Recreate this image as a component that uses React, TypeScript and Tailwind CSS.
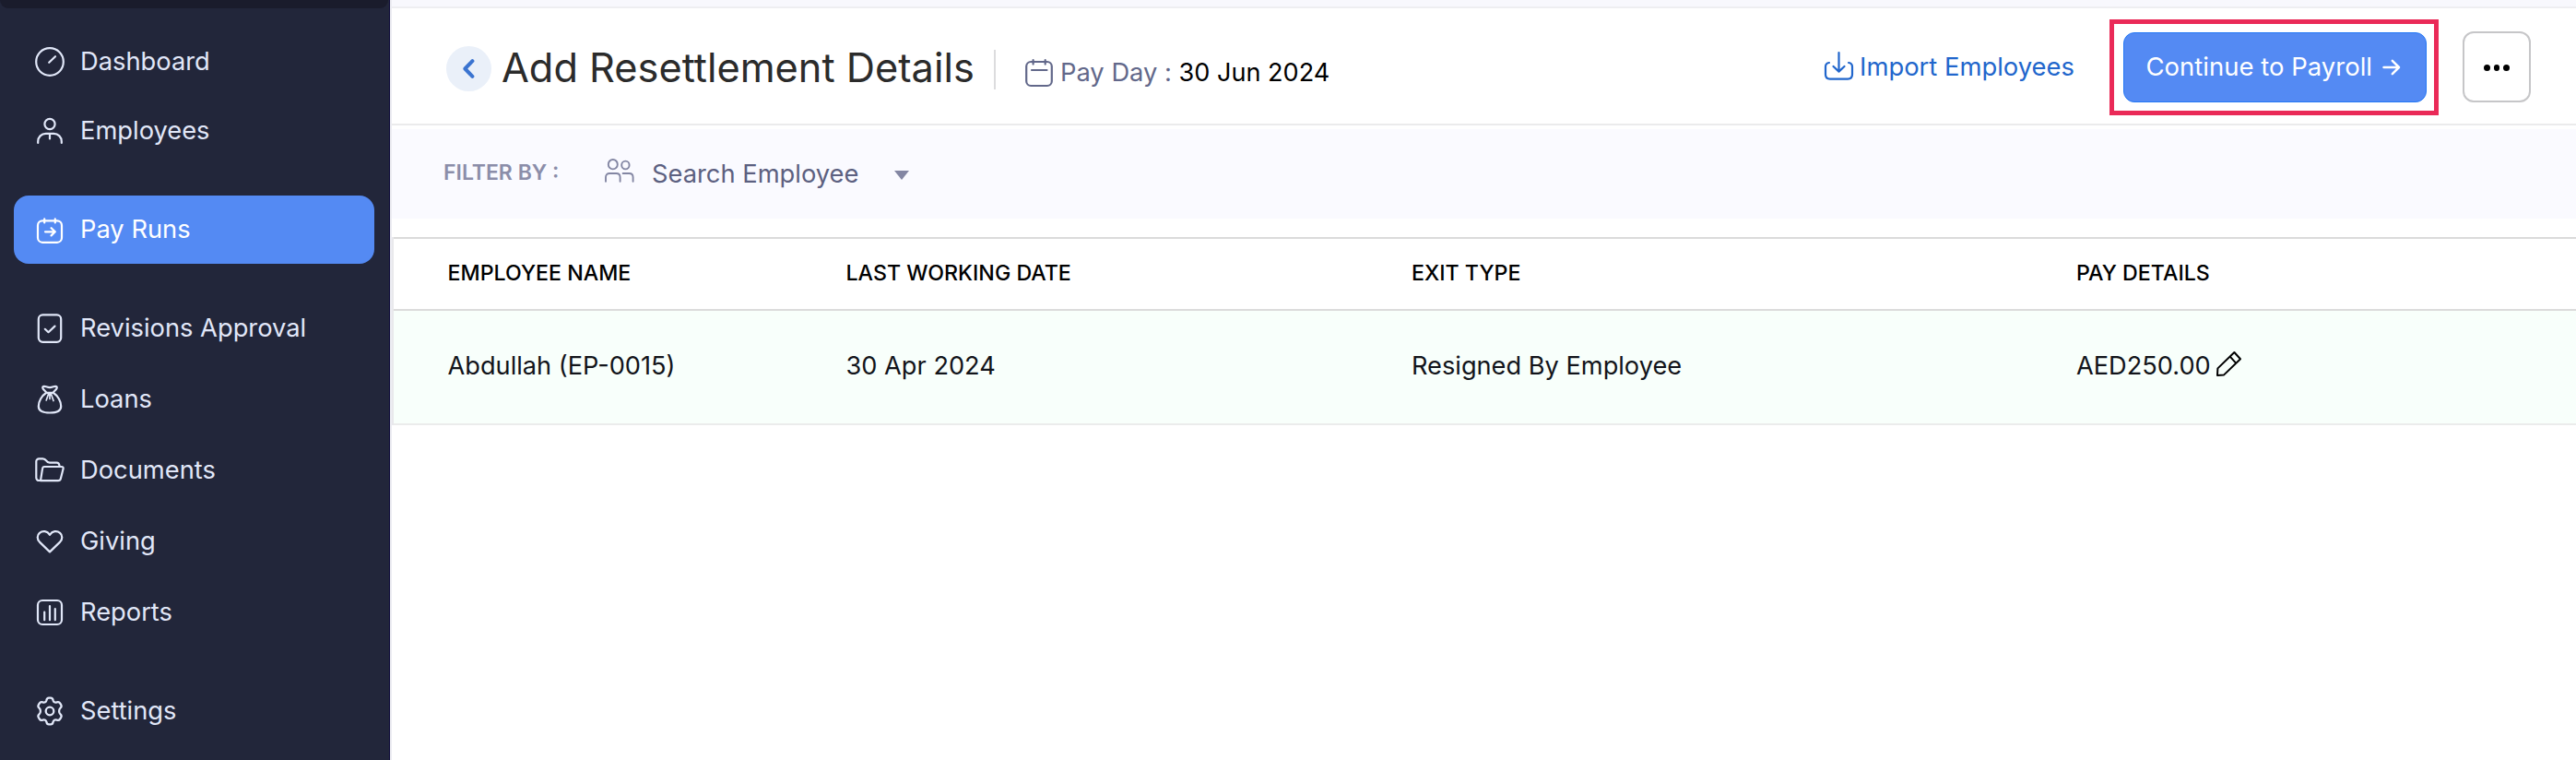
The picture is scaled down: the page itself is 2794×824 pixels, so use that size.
import type { ReactNode } from "react";

function Icon({ children, className = "w-8 h-8", box = "0 0 32 32", stroke = 2.2 }: {
  children: ReactNode;
  className?: string;
  box?: string;
  stroke?: number;
}) {
  return (
    <svg
      viewBox={box}
      className={`shrink-0 overflow-visible ${className}`}
      fill="none"
      stroke="currentColor"
      strokeWidth={stroke}
      strokeLinecap="round"
      strokeLinejoin="round"
    >
      {children}
    </svg>
  );
}

const navItems = [
  {
    name: "Dashboard",
    gap: "mt-[30px]",
    icon: (
      <Icon>
        <circle cx="16" cy="16" r="14.8" />
        <path d="M15.2 16.8 22 10.2" />
      </Icon>
    ),
  },
  {
    name: "Employees",
    gap: "mt-px",
    icon: (
      <Icon>
        <circle cx="16" cy="8.5" r="5.6" />
        <path d="M3.2 29v-1.5a8.5 8.5 0 0 1 8.5-8.7h8.6a8.5 8.5 0 0 1 8.5 8.7V29M16 19v5.5" />
      </Icon>
    ),
  },
  {
    name: "Pay Runs",
    gap: "mt-[33px]",
    active: true,
    icon: (
      <Icon>
        <rect x="3" y="6.4" width="26" height="23.4" rx="5" />
        <path d="M10.2 4.4v4M21.8 4.4v4M11 18.3h10.5M17.6 14.2l4.2 4.1-4.2 4.1" />
      </Icon>
    ),
  },
  {
    name: "Revisions Approval",
    gap: "mt-[33px]",
    icon: (
      <Icon>
        <rect x="3.8" y="1.4" width="24.4" height="29.4" rx="4.5" />
        <path d="m10.8 16.8 3.7 3.4 7-6.6" />
      </Icon>
    ),
  },
  {
    name: "Loans",
    gap: "mt-[3px]",
    icon: (
      <Icon>
        <path d="M12.3 8.8C11 6.4 7.2 4.6 8.4 2.5c1.5-2 4 .6 7.6.6s6.1-2.6 7.6-.6c1.2 2.1-2.6 3.9-3.9 6.3z" />
        <path d="M12.3 8.8C7 12.2 3.8 18.6 3.8 23.4c0 5 4.2 7.1 12.2 7.1s12.2-2.1 12.2-7.1c0-4.8-3.2-11.2-8.5-14.6" />
        <path d="M14.8 9.5 12.2 17M16 9.5v6M17.2 9.5l2.8 8" strokeWidth="1.7" />
      </Icon>
    ),
  },
  {
    name: "Documents",
    gap: "mt-[3px]",
    icon: (
      <Icon>
        <path d="M6 27H4.3a3 3 0 0 1-3-3V6.3a3 3 0 0 1 3-3h4.2c1.7 0 2.6.6 3.6 2.1s2 2.3 3.7 2.3h7.7c1.8 0 2.6.9 3 3.2" />
        <path d="M10.2 12h18.4c1.7 0 2.3 1 1.9 2.5l-2.6 10.3c-.4 1.7-1.2 2.4-2.9 2.4H6l2-12.8c.2-1.6.8-2.4 2.2-2.4z" />
      </Icon>
    ),
  },
  {
    name: "Giving",
    gap: "mt-[3px]",
    icon: (
      <Icon>
        <path d="M16 27.4 4.9 16.6C2 13.5 2 9.3 4.9 6.8 8.3 4 13.2 4.6 16 8.8c2.8-4.2 7.7-4.8 11.1-2 2.9 2.5 2.9 6.7 0 9.8z" />
      </Icon>
    ),
  },
  {
    name: "Reports",
    gap: "mt-[3px]",
    icon: (
      <Icon>
        <rect x="3" y="3" width="26" height="26" rx="5" />
        <path d="M10.2 15.5v8.7M16 9v15.2M21.8 12v12.2" />
      </Icon>
    ),
  },
  {
    name: "Settings",
    gap: "mt-[33px]",
    icon: (
      <Icon stroke={2.3}>
        <path d="M12.4 4.2C12.7 2.4 13.4 1.6 15 1.6h2c1.6 0 2.3.8 2.6 2.6.4 2 2 2.9 3.9 2.2 1.7-.7 2.8-.4 3.6 1l1.1 1.8c.8 1.4.5 2.5-.9 3.6-1.6 1.3-1.6 5.1 0 6.4 1.4 1.1 1.7 2.2.9 3.6l-1.1 1.8c-.8 1.4-1.9 1.7-3.6 1-1.9-.7-3.5.2-3.9 2.2-.3 1.8-1 2.6-2.6 2.6h-2c-1.6 0-2.3-.8-2.6-2.6-.4-2-2-2.9-3.9-2.2-1.7.7-2.8.4-3.6-1l-1.1-1.8c-.8-1.4-.5-2.5.9-3.6 1.6-1.3 1.6-5.1 0-6.4-1.4-1.1-1.7-2.2-.9-3.6l1.1-1.8c.8-1.4 1.9-1.7 3.6-1 1.9.7 3.5-.2 3.9-2.2z" />
        <circle cx="16" cy="16" r="4.3" />
      </Icon>
    ),
  },
];

function Sidebar() {
  return (
    <aside className="w-[423px] shrink-0 h-full bg-[#22263a] border-r border-[#0d0b38]">
      <div className="h-[9px] w-[421px] rounded-b-2xl bg-[#1a1c2c]" />
      <nav className="flex flex-col px-[15px] -mt-[9px]">
        {navItems.map((item) => (
          <a
            key={item.name}
            href="#"
            className={`flex items-center h-[74px] w-[391px] rounded-2xl pl-[23px] gap-[17px] text-[27.3px] ${
              item.active ? "bg-[#548af3] text-white" : "text-[#e1e7f8]"
            } ${item.gap}`}
          >
            {item.icon}
            <span className="whitespace-nowrap">{item.name}</span>
          </a>
        ))}
      </nav>
    </aside>
  );
}

function PageHeader() {
  return (
    <header className="flex items-start h-[127px] bg-white border-b-2 border-[#ebebec] pl-[59px] pr-[49px] whitespace-nowrap">
      <button className="mt-[41px] w-[49px] h-[49px] rounded-full bg-[#eaf0f9] text-[#3b74d0] flex items-center justify-center">
        <Icon className="w-[13px] h-[21px]" box="0 0 13 21" stroke={4}>
          <path d="M10.4 2.2 2.4 10.5l8 8.3" />
        </Icon>
      </button>
      <h1 className="mt-[38px] ml-[11px] text-[43.3px] leading-[52px] text-[#2b2b2b] w-[534px]">Add Resettlement Details</h1>
      <div className="mt-[45px] w-[2px] h-[43px] bg-[#dcdcde]" />
      <div className="mt-[50px] ml-[32px] flex items-center text-[27.3px] leading-[40px] text-[#62688a]">
        <Icon className="w-[30px] h-[32px] -mt-px" box="0 0 30 32">
          <rect x="1.2" y="4" width="27.6" height="26" rx="5" />
          <path d="M8.6 2.2v4.4M21.7 2.2v4.4M7 13h16.5" />
        </Icon>
        <span className="ml-[8px] w-[128.5px]">Pay Day :</span>
        <span className="text-[27.1px] text-black">30 Jun 2024</span>
      </div>

      <div className="ml-auto flex items-start">
        <a href="#" className="mt-[43px] flex items-center text-[27.4px] leading-[40px] text-[#2166cc]">
          <Icon className="w-[31px] h-[32px]" box="0 0 31 32">
            <path d="M5 12c-2.6.3-4 1.6-4 4.4v8.4c0 3 1.8 4.8 4.8 4.8h19.4c3 0 4.8-1.8 4.8-4.8v-8.4c0-2.8-1.4-4.1-4-4.4" />
            <path d="M15.5 1v20.5M9.5 16l6 5.6 6-5.6" />
          </Icon>
          <span className="ml-[7px]">Import Employees</span>
        </a>
        <div className="mt-[12px] ml-[38px] w-[357px] h-[104px] border-[5px] border-[#ea2a58] flex items-center justify-center">
          <button className="w-[329px] h-[76px] -mt-px ml-px rounded-xl bg-[#548af3] border border-[#2478f5] text-white text-[27.5px] flex items-center pl-[24px]">
            Continue to Payroll
            <Icon className="w-[20px] h-[18px] ml-[11px]" box="0 0 20 18" stroke={2.5}>
              <path d="M1.5 9h16M10.8 1.8 18 9l-7.2 7.2" />
            </Icon>
          </button>
        </div>
        <button className="mt-[25px] ml-[26px] w-[74px] h-[77px] rounded-xl border-2 border-[#c6c6c8] flex items-center justify-center gap-[4px] pt-[2px]">
          <span className="w-[6.5px] h-[6.5px] rounded-full bg-black" />
          <span className="w-[6.5px] h-[6.5px] rounded-full bg-black" />
          <span className="w-[6.5px] h-[6.5px] rounded-full bg-black" />
        </button>
      </div>
    </header>
  );
}

function FilterBar() {
  return (
    <div className="mt-1 h-[97px] bg-[#fafaff] flex items-center pl-[56px] whitespace-nowrap">
      <span className="text-[23px] font-semibold text-[#8b8da9] w-[175px] -mt-[3px]">FILTER BY :</span>
      <Icon className="w-[32px] h-[26px] text-[#8386a3] -mt-[8px]" box="0 0 32 26" stroke={1.9}>
        <ellipse cx="8.8" cy="6.2" rx="5" ry="5.2" />
        <ellipse cx="22.4" cy="7" rx="4.2" ry="4.4" />
        <path d="M1 24.8v-4.6c0-2.7 1.5-4.2 4.2-4.2h7.2c2.7 0 4.2 1.5 4.2 4.2v4.6M19.6 16h6.8c2.7 0 4.2 1.5 4.2 4.2v4.6" />
      </Icon>
      <span className="ml-[19px] mt-[2px] w-[263px] text-[27.3px] text-[#5c6080]">Search Employee</span>
      <span className="mt-[2px] border-x-[8px] border-x-transparent border-t-[10px] border-t-[#8386a3]" />
    </div>
  );
}

const columns = "grid grid-cols-[432px_613.5px_721px_1fr] items-center pl-[58.5px] pb-[2px] whitespace-nowrap";

const rows = [
  { name: "Abdullah (EP-0015)", date: "30 Apr 2024", exit: "Resigned By Employee", pay: "AED250.00" },
];

function EmployeeTable() {
  return (
    <div className="mt-5 border-l-2 border-[#e9e9ec]">
      <div className={`${columns} h-[80px] border-y-2 border-[#dbdbdb] text-[23.2px] font-medium text-black`}>
        <span>EMPLOYEE NAME</span>
        <span>LAST WORKING DATE</span>
        <span>EXIT TYPE</span>
        <span>PAY DETAILS</span>
      </div>
      {rows.map((row) => (
        <div key={row.name} className={`${columns} h-[124px] bg-[#f8fffb] border-b-2 border-[#ebecec] text-[27.2px] text-[#12141a]`}>
          <span>{row.name}</span>
          <span>{row.date}</span>
          <span>{row.exit}</span>
          <span className="flex items-center">
            {row.pay}
            <Icon className="w-[27px] h-[27px] ml-[6px] -mt-[4px] text-black" box="0 0 27 27" stroke={2}>
              <path d="M1 26l.4-7.6L19.4 1 26 8.2 8.2 25.4zM14.8 5.6l6.5 7.2" />
            </Icon>
          </span>
        </div>
      ))}
    </div>
  );
}

export default function App() {
  return (
    <div className="flex w-[2794px] h-[824px] overflow-hidden bg-white font-['Inter',sans-serif]">
      <Sidebar />
      <main className="flex-1 min-w-0 border-l-2 border-[#ededf3]">
        <div className="h-[9px] bg-[#f8f8fd] border-b-2 border-[#eeeef1]" />
        <PageHeader />
        <FilterBar />
        <EmployeeTable />
      </main>
    </div>
  );
}
